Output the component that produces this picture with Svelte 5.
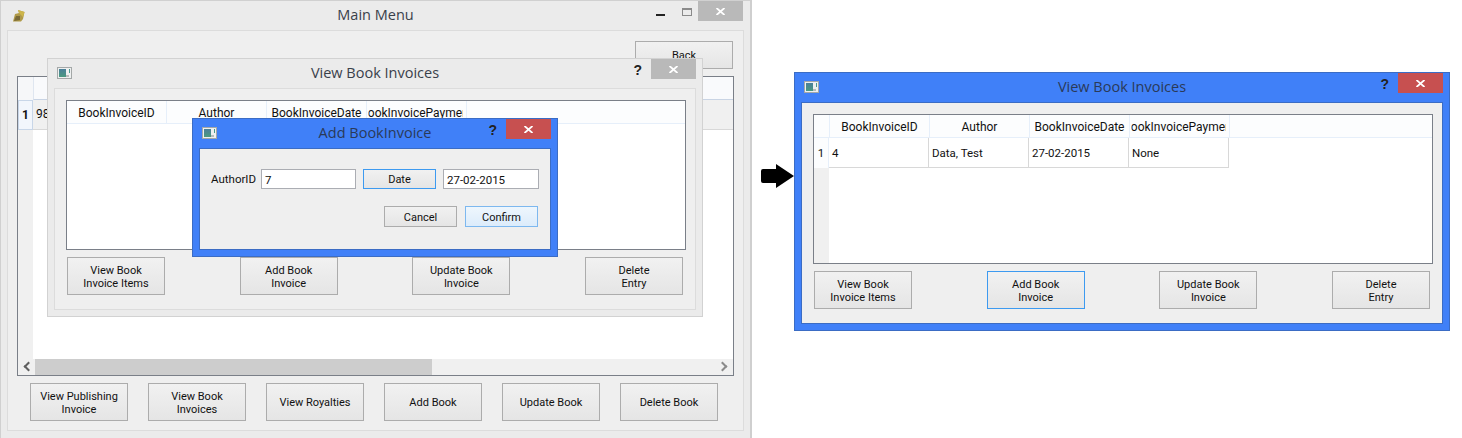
<script>
  const cols = [
    { label: 'BookInvoiceID', cell: '4' },
    { label: 'Author', cell: 'Data, Test' },
    { label: 'BookInvoiceDate', cell: '27-02-2015' },
    { label: 'BookInvoicePayment', cell: 'None' }
  ];
  const viewButtons = [['View Book', 'Invoice Items'], ['Add Book', 'Invoice'], ['Update Book', 'Invoice'], ['Delete', 'Entry']];
  const mainButtons = [['View Publishing', 'Invoice'], ['View Book', 'Invoices'], ['View Royalties'], ['Add Book'], ['Update Book'], ['Delete Book']];
</script>

{#snippet appIcon()}
  <svg class="appicon" width="15" height="12" viewBox="0 0 15 12">
    <defs>
      <linearGradient id="panel" x1="0" y1="0" x2="0" y2="1">
        <stop offset="0" stop-color="#4a7f9a" />
        <stop offset="1" stop-color="#4a9a80" />
      </linearGradient>
    </defs>
    <rect x="0.5" y="0.5" width="14" height="11" fill="#eef0f0" stroke="#a4a8a8" />
    <rect x="2" y="2" width="7" height="8" fill="url(#panel)" />
    <rect x="9" y="8" width="3" height="2" fill="#b8bcbc" />
    <rect x="12" y="2" width="1" height="4" fill="#4a9a90" />
  </svg>
{/snippet}

{#snippet closeBtn(active)}
  <div class="close" class:active>
    <svg width="9" height="7" viewBox="0 0 9 7"><path d="M0.5 0 L8.5 7 M8.5 0 L0.5 7" stroke="#fff" stroke-width="1.8" /></svg>
  </div>
{/snippet}

{#snippet help()}
  <span class="help">?</span>
{/snippet}

{#snippet pushButtons(list, focusIndex)}
  {#each list as lines, i}
    <button class="btn" class:focus={i === focusIndex} class:two={lines.length > 1}>
      {#each lines as line, j}{#if j > 0}<br />{/if}{line}{/each}
    </button>
  {/each}
{/snippet}

{#snippet invoiceTable(withRow)}
  <div class="table" class:rowed={withRow}>
    <div class="thead">
      {#if withRow}<div class="corner"></div>{/if}
      {#each cols as c}
        <div class="th"><span>{c.label}</span></div>
      {/each}
    </div>
    {#if withRow}
      <div class="tbody">
        <div class="rowhead"><div class="rownum">1</div></div>
        <div class="tr">
          {#each cols as c}<div class="td">{c.cell}</div>{/each}
        </div>
      </div>
    {/if}
  </div>
{/snippet}

{#snippet viewWindow(active)}
  <div class="win viewwin" class:active class:at-left={!active} class:at-right={active}>
    <div class="titlebar">
      {@render appIcon()}
      <div class="title">View Book Invoices</div>
      {@render help()}
      {@render closeBtn(active)}
    </div>
    <div class="frame viewframe">
      {@render invoiceTable(active)}
      <div class="btnrow">
        {@render pushButtons(viewButtons, active ? 1 : -1)}
      </div>
    </div>
  </div>
{/snippet}

<div class="stage">
  <div class="win mainwin">
    <div class="titlebar maintitle">
      <svg class="bookicon" width="14" height="14" viewBox="0 0 14 14">
        <path d="M1 12.5 L3 5 L7 4 L6 1 L12.5 3 L11 10 L9 12.5 Z" fill="#b09a48" />
        <path d="M7 4 L6 1 L12.5 3 L11 8 Z" fill="#cdb54a" />
        <path d="M2 12 L4 7 L8 7 L8 11 Z" fill="#7a6a36" />
      </svg>
      <div class="title">Main Menu</div>
      <div class="minimize"></div>
      <div class="maximize"></div>
      {@render closeBtn(false)}
    </div>
    <div class="frame mainframe">
      <div class="backrow"><button class="btn back">Back</button></div>
      <div class="maintable">
        <div class="mt-grid">
          <div class="mt-side">
            <div class="mt-corner"></div>
            <div class="mt-num">1</div>
          </div>
          <div class="mt-body">
            <div class="mt-head"></div>
            <div class="mt-row">98</div>
          </div>
        </div>
        <div class="scroll">
          <span class="arrow left"></span>
          <div class="thumb"></div>
          <span class="arrow right"></span>
        </div>
      </div>
      <div class="btnrow mainbtns">
        {@render pushButtons(mainButtons, -1)}
      </div>
    </div>
  </div>

  {@render viewWindow(false)}

  <div class="win addwin active">
    <div class="titlebar">
      {@render appIcon()}
      <div class="title">Add BookInvoice</div>
      {@render help()}
      {@render closeBtn(true)}
    </div>
    <div class="frame addframe">
      <div class="formrow">
        <span class="lbl">AuthorID</span>
        <div class="input">7</div>
        <button class="btn date focus">Date</button>
        <div class="input last">27-02-2015</div>
      </div>
      <div class="actions">
        <button class="btn small">Cancel</button>
        <button class="btn small default">Confirm</button>
      </div>
    </div>
  </div>

  <svg class="bigarrow" width="34" height="26" viewBox="0 0 34 26">
    <path d="M2 6 H15 V1 L33 13 L15 25 V20 H2 Q0 20 0 18 V8 Q0 6 2 6 Z" fill="#000" />
  </svg>

  {@render viewWindow(true)}
</div>

<style>
  :global(body) { margin: 0; background: #fff; }
  .stage {
    position: relative;
    width: 1462px;
    height: 438px;
    overflow: hidden;
    font-family: Roboto, "Noto Sans", sans-serif;
    font-size: 11.5px;
    color: #111;
  }
  .win {
    position: absolute;
    box-sizing: border-box;
    background: #ebebeb;
    border: 1px solid #d2d2d2;
    display: flex;
    flex-direction: column;
  }
  .win.active { background: #4080f8; border-color: #3b6cc4; }
  .mainwin { left: 0; top: 0; width: 752px; height: 450px; border: 1px solid #d0d0d0; border-right: 2px solid #cfcfcf; }
  .viewwin { width: 656px; height: 259px; }
  .at-left { left: 47px; top: 58px; }
  .at-right { left: 794px; top: 72px; }
  .addwin { left: 192px; top: 118px; width: 366px; height: 139px; }

  .titlebar {
    position: relative;
    height: 29px;
    flex: none;
    display: flex;
    align-items: flex-start;
  }
  .appicon { margin: 8px 0 0 9px; flex: none; }
  .bookicon { margin: 8px 0 0 11px; flex: none; }
  .title {
    position: absolute;
    left: 0; right: 0; top: 4px;
    text-align: center;
    font-family: "Open Sans", "Noto Sans", sans-serif;
    font-size: 14.5px;
    line-height: 20px;
    color: #39404a;
  }
  .active .title { color: #2a3a58; }
  .help {
    position: absolute;
    right: 60px; top: 2px;
    font-family: "Liberation Sans", sans-serif;
    font-weight: 700;
    font-size: 14px;
    line-height: 18px;
    color: #222;
  }
  .close {
    position: absolute;
    right: 6px; top: 0;
    width: 45px; height: 20px;
    background: #b9b9b9;
    display: flex;
    align-items: center;
    justify-content: center;
  }
  .close.active { background: #c75050; }
  .maintitle .close { right: 7px; }
  .minimize {
    position: absolute;
    left: 655px; top: 13px;
    width: 9px; height: 2px;
    background: #222;
  }
  .maximize {
    position: absolute;
    left: 681px; top: 7px;
    width: 8px; height: 5px;
    border: 1px solid #8a8a8a;
    border-top-width: 2px;
  }

  .frame {
    box-sizing: border-box;
    background: #efefef;
    border: 1px solid #dcdcdc;
    margin: 0 6px 6px;
    flex: 1;
    min-height: 0;
  }
  .active > .frame { border-color: #3b6cc4; }

  .mainframe {
    flex: none;
    height: 401px;
    margin: 0 6px 0 6px;
    padding: 10px 9px 0 9px;
    display: flex;
    flex-direction: column;
  }
  .backrow { display: flex; justify-content: flex-end; height: 35px; flex: none; padding-right: 1px; }
  .btn.back { width: 98px; height: 28px; }

  .maintable {
    box-sizing: border-box;
    height: 300px;
    width: 717px;
    flex: none;
    border: 1px solid #7a7f88;
    background: #fff;
    display: flex;
    flex-direction: column;
  }
  .mt-grid { flex: 1; display: flex; min-height: 0; }
  .mt-side { width: 15px; flex: none; background: #f0f0f0; }
  .mt-corner { height: 23px; background: #f6f7f9; }
  .mt-num {
    box-sizing: border-box;
    height: 30px;
    background: #f2f6fc;
    border: 1px solid #c8d6e8;
    font-weight: 700;
    font-size: 12px;
    line-height: 28px;
    text-align: center;
  }
  .mt-body { flex: 1; }
  .mt-head { box-sizing: border-box; height: 23px; background: #f9fafc; border-left: 1px solid #dfe6f0; border-bottom: 1px solid #c9d4e4; }
  .mt-row { box-sizing: border-box; height: 30px; background: #f0f0f0; border-bottom: 1px solid #d8d8d8; padding-left: 3px; line-height: 28px; font-size: 12px; }
  .scroll {
    position: relative;
    height: 16px;
    flex: none;
    background: #f0f0f0;
    padding-left: 17px;
  }
  .thumb { width: 397px; height: 16px; background: #cdcdcd; }
  .arrow {
    position: absolute;
    top: 4px;
    width: 5px; height: 5px;
    border-left: 2px solid #606060;
    border-bottom: 2px solid #606060;
  }
  .arrow.left { left: 7px; transform: rotate(45deg); }
  .arrow.right { right: 7px; transform: rotate(225deg); border-color: #8a8a8a; }

  .btn {
    box-sizing: border-box;
    width: 98px;
    height: 38px;
    padding: 0;
    margin: 0;
    background: linear-gradient(#f1f1f1, #e5e5e5);
    border: 1px solid #acacac;
    border-radius: 0;
    font: inherit;
    font-size: 11px;
    line-height: 13px;
    color: #111;
    text-align: center;
  }
  .btn.two { padding-top: 2px; }
  .btn.focus { border-color: #3d9af0; }
  .btn.default { background: linear-gradient(#eef6fd, #dcecfb); border-color: #7db8ef; }

  .btnrow { display: flex; justify-content: space-between; }
  .mainbtns {
    margin-top: 7px;
    padding: 0 6px 0 13px;
    gap: 20px;
    justify-content: flex-start;
    width: 688px;
  }

  .viewframe { padding: 11px 9px 0 11px; display: flex; flex-direction: column; }
  .viewframe .btnrow { margin-top: 7px; padding: 0 3px 0 1px; }

  .table {
    box-sizing: border-box;
    height: 150px;
    flex: none;
    border: 1px solid #7a7f88;
    background: #fff;
    position: relative;
  }
  .thead { display: flex; height: 23px; box-sizing: border-box; background: #fcfdfe; border-bottom: 1px solid #e6effa; }
  .corner { width: 15px; flex: none; border-right: 1px solid #e6effa; }
  .th {
    box-sizing: border-box;
    width: 100px;
    flex: none;
    display: flex;
    justify-content: center;
    overflow: hidden;
    white-space: nowrap;
    border-right: 1px solid #e6effa;
    font-size: 12px;
    line-height: 21px;
    padding-top: 2px;
  }
  .th span { flex: none; }
  .th:last-child span { clip-path: inset(0 10px 0 8px); }
  .tbody { display: flex; height: 125px; }
  .rowhead { width: 15px; flex: none; background: #f0f0f0; }
  .rownum { box-sizing: border-box; height: 30px; background: #fcfdfe; text-align: center; line-height: 30px; border-right: 1px solid #e6effa; }
  .tr { display: flex; height: 30px; }
  .td {
    box-sizing: border-box;
    width: 100px;
    height: 30px;
    border-right: 1px solid #d8d8d8;
    border-bottom: 1px solid #d8d8d8;
    padding-left: 3px;
    line-height: 30px;
  }

  .addframe { padding: 20px 11px 0 11px; }
  .formrow { display: flex; align-items: center; height: 20px; }
  .lbl { width: 50px; flex: none; line-height: 22px; }
  .input {
    box-sizing: border-box;
    width: 95px;
    height: 20px;
    flex: none;
    border: 1px solid #abadb3;
    background: #fff;
    padding-left: 3px;
    line-height: 20px;
  }
  .input.last { width: 96px; }
  .btn.date { width: 73px; height: 20px; margin: 0 7px; padding-top: 1px; }
  .actions { display: flex; justify-content: flex-end; gap: 8px; margin-top: 17px; padding-right: 1px; }
  .btn.small { width: 73px; height: 21px; padding-top: 1px; }

  .bigarrow { position: absolute; left: 761px; top: 163px; }
</style>
